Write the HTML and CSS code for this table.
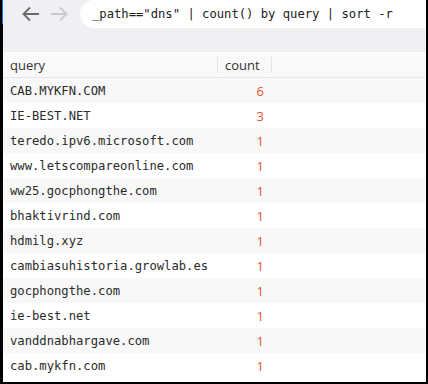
FILE: index.html
```html
<!DOCTYPE html>
<html lang="en">
<head>
  <meta charset="UTF-8" />
  <title>Query results</title>
  <link rel="stylesheet" href="styles.css">
</head>
<body>
  <div class="frame">
    <div class="toolbar">
      <div class="nav">
        <svg class="arrow back" width="18" height="16" viewBox="0 0 18 16"><path d="M17 8H2M8 1.5L1.5 8 8 14.5" fill="none" stroke="currentColor" stroke-width="1.8"/></svg>
        <svg class="arrow fwd" width="18" height="16" viewBox="0 0 18 16"><path d="M1 8h15M10 1.5L16.5 8 10 14.5" fill="none" stroke="currentColor" stroke-width="1.8"/></svg>
      </div>
      <div class="search">_path=="dns" | count() by query | sort -r</div>
    </div>

    <div class="table">
      <div class="row head">
        <div class="cell query">query</div>
        <div class="cell count">count</div>
      </div>
      <div class="row"><div class="cell query">CAB.MYKFN.COM</div><div class="cell count">6</div></div>
      <div class="row"><div class="cell query">IE-BEST.NET</div><div class="cell count">3</div></div>
      <div class="row"><div class="cell query">teredo.ipv6.microsoft.com</div><div class="cell count">1</div></div>
      <div class="row"><div class="cell query">www.letscompareonline.com</div><div class="cell count">1</div></div>
      <div class="row"><div class="cell query">ww25.gocphongthe.com</div><div class="cell count">1</div></div>
      <div class="row"><div class="cell query">bhaktivrind.com</div><div class="cell count">1</div></div>
      <div class="row"><div class="cell query">hdmilg.xyz</div><div class="cell count">1</div></div>
      <div class="row"><div class="cell query">cambiasuhistoria.growlab.es</div><div class="cell count">1</div></div>
      <div class="row"><div class="cell query">gocphongthe.com</div><div class="cell count">1</div></div>
      <div class="row"><div class="cell query">ie-best.net</div><div class="cell count">1</div></div>
      <div class="row"><div class="cell query">vanddnabhargave.com</div><div class="cell count">1</div></div>
      <div class="row"><div class="cell query">cab.mykfn.com</div><div class="cell count">1</div></div>
    </div>
  </div>
</body>
</html>
```

FILE: styles.css
```css
* { margin: 0; padding: 0; box-sizing: border-box; }
body {
  width: 428px;
  height: 384px;
  background: #000;
  overflow: hidden;
}
.frame {
  position: relative;
  width: 428px;
  height: 384px;
  border-left: 3px solid #000;
  border-right: 2px solid #000;
  border-bottom: 2px solid #000;
  background: #fff;
}
.frame::before {
  content: "";
  position: absolute;
  left: -1px;
  top: 0;
  width: 1px;
  height: 24px;
  background: #1a73e8;
}
.toolbar {
  display: flex;
  align-items: flex-start;
  height: 52px;
  background: #eff0f4;
}
.nav {
  display: flex;
  gap: 10px;
  padding: 6px 0 0 19px;
  width: 77px;
}
.arrow.back { color: #6b6b6b; }
.arrow.fwd { color: #c9cacc; }
.search {
  flex: 1;
  height: 28px;
  margin-top: 0;
  background: #fff;
  border-radius: 14px 0 0 14px;
  padding: 7px 0 0 12px;
  font-family: "DejaVu Sans Mono", monospace;
  font-size: 12.2px;
  color: #222;
  white-space: nowrap;
}
.table {
  display: flex;
  flex-direction: column;
}
.row {
  display: flex;
  height: 25px;
  align-items: center;
}
.row:nth-child(even) { background: #f8f8f8; }
.row.head {
  height: 26px;
  background: #f9f9f9;
  border-top: 1px solid #fdfdfd;
  border-bottom: 1px solid #e6e6e6;
  font-family: "Open Sans", sans-serif;
  font-size: 13px;
  color: #333;
}
.cell.query {
  width: 215px;
  padding-left: 7px;
  font-family: "DejaVu Sans Mono", monospace;
  font-size: 12.2px;
  color: #2b2b2b;
  white-space: nowrap;
}
.cell.count {
  width: 54px;
  padding-right: 8px;
  text-align: right;
  font-family: "Open Sans", sans-serif;
  font-size: 13px;
  color: #e5532f;
}
.head .cell {
  height: 16px;
  line-height: 16px;
  font-family: "Open Sans", sans-serif;
  font-size: 13px;
  color: #333;
}
.head .cell.query { border-right: 1px solid #e3e3e3; }
.head .cell.count {
  text-align: left;
  padding-left: 7px;
  border-right: 1px solid #e3e3e3;
}
```
